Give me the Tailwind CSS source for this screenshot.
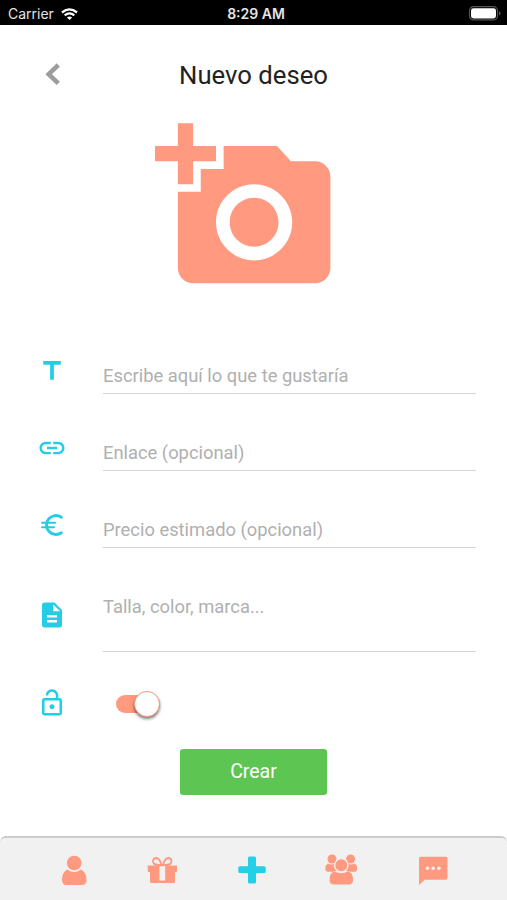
<!DOCTYPE html>
<html lang="es">
<head>
<meta charset="utf-8">
<title>Nuevo deseo</title>
<script src="https://cdn.jsdelivr.net/npm/@tailwindcss/browser@4"></script>
</head>
<body class="w-[507px] h-[900px] overflow-hidden bg-white flex flex-col font-[Roboto,sans-serif]">
  <header class="h-[25px] shrink-0 bg-black text-[#e4e4e4] grid grid-cols-3 items-center pl-[8px] pr-[6px] pt-[2px] font-[Inter,sans-serif]">
    <div class="flex items-center gap-[7px] text-[14px] leading-none">
      <span>Carrier</span>
      <svg class="w-[17px] h-[12px]" viewBox="0 0 17 12" fill="none" stroke="#fff" stroke-width="2.3"><path d="M1 4.5Q8.500 -1.800 16 4.500M3.700 7.400Q8.500 3.400 13.300 7.400"/><path d="M8.500 12L5.900 9.400Q8.500 7.400 11.100 9.400Z" fill="#fff" stroke="none"/></svg>
    </div>
    <div class="pl-[3px] text-center text-[14px] leading-none font-semibold whitespace-nowrap">8:29 AM</div>
    <svg class="w-[33px] h-[15px] justify-self-end" viewBox="0 0 33 15"><rect x="1.500" y=".7" width="28" height="13.200" rx="4" fill="none" stroke="#555" stroke-width="1.200"/><rect x="3" y="2.200" width="25" height="10.200" rx="2.400" fill="#fff"/><path d="M31 5v4.600q1.500-.6 1.500-2.300T31 5z" fill="#555"/></svg>
  </header>

  <div class="h-[98px] shrink-0 grid grid-cols-[104px_1fr_104px] items-start pt-[34px]">
    <svg class="w-[18px] h-[24px] ml-[44px] mt-[3px]" viewBox="0 0 18 24" fill="none" stroke="#9d9d9d" stroke-width="4.600"><path d="M14.300 3L4.700 12.200L14.300 21.400"/></svg>
    <h1 class="text-center text-[25.7px] leading-[32px] text-[#222]">Nuevo deseo</h1>
  </div>

  <main class="flex-1 flex flex-col">
    <svg class="w-[183px] h-[184px] ml-[155px] -mt-[8px] shrink-0" viewBox="0 0 24 24" fill="#ff9980"><path d="M3 4V1h2v3h3v2H5v3H3V6H0V4h3zm3 6V7h3V4h7l1.830 2H21c1.100 0 2 .9 2 2v12c0 1.100-.9 2-2 2H5c-1.100 0-2-.9-2-2V10h3zm7 9c2.760 0 5-2.240 5-5s-2.240-5-5-5-5 2.240-5 5 2.240 5 5 5zm-3.200-5c0 1.770 1.430 3.200 3.200 3.200s3.200-1.430 3.200-3.200-1.430-3.200-3.200-3.200-3.200 1.430-3.200 3.200z"/></svg>

    <form class="mt-[19px] ml-[37px] mr-[31px] flex flex-col text-[18.35px] text-[#b0b0b0] leading-[36px]">
      <div class="h-[77px] flex gap-[36px] pt-[38px]">
        <svg class="w-[30px] h-[30px] shrink-0" viewBox="0 0 24 24" fill="#24cde6"><path d="M5 4v3h5.500v12h3V7H19V4z"/></svg>
        <div class="flex-1 h-[38px] pt-[2px] border-b border-[#d4d4d4]">Escribe aquí lo que te gustaría</div>
      </div>
      <div class="h-[77px] flex gap-[36px] pt-[38px]">
        <svg class="w-[30px] h-[30px] shrink-0" viewBox="0 0 24 24" fill="#24cde6"><path d="M3.900 12c0-1.710 1.390-3.100 3.100-3.100h4V7H7c-2.760 0-5 2.240-5 5s2.240 5 5 5h4v-1.900H7c-1.710 0-3.100-1.390-3.100-3.100zM8 13h8v-2H8v2zm9-6h-4v1.900h4c1.710 0 3.100 1.390 3.100 3.100s-1.390 3.100-3.100 3.100h-4V17h4c2.760 0 5-2.240 5-5s-2.240-5-5-5z"/></svg>
        <div class="flex-1 h-[38px] pt-[2px] border-b border-[#d4d4d4]">Enlace (opcional)</div>
      </div>
      <div class="h-[77px] flex gap-[36px] pt-[38px]">
        <svg class="w-[30px] h-[30px] shrink-0" viewBox="0 0 30 30" fill="none" stroke="#24cde6" stroke-linecap="round"><path d="M24.400 7.200A9.500 9.500 0 1 0 24.400 22.800" stroke-width="2.900"/><path d="M5 12.800H18.200M5 17.200H17.200" stroke-width="1.900"/></svg>
        <div class="flex-1 h-[38px] pt-[2px] border-b border-[#d4d4d4]">Precio estimado (opcional)</div>
      </div>
      <div class="h-[104px] flex gap-[36px] pt-[38px]">
        <svg class="w-[30px] h-[30px] mt-[13px] shrink-0" viewBox="0 0 24 24" fill="#24cde6"><path d="M14 2H6c-1.100 0-2 .9-2 2v16c0 1.100.89 2 1.990 2H18c1.100 0 2-.9 2-2V8l-6-6zm2 16H8v-2h8v2zm0-4H8v-2h8v2zm-3-5V3.500L18.500 9H13z"/></svg>
        <div class="flex-1 h-[65px] pt-[2px] border-b border-[#d4d4d4]">Talla, color, marca...</div>
      </div>
      <div class="h-[65px] flex items-center gap-[49px] pt-[35px]">
        <svg class="w-[30px] h-[30px] shrink-0" viewBox="0 0 24 24" fill="#24cde6"><path d="M12 17c1.100 0 2-.9 2-2s-.9-2-2-2-2 .9-2 2 .9 2 2 2zm6-9h-1V6c0-2.760-2.240-5-5-5S7 3.240 7 6h1.900c0-1.710 1.390-3.100 3.100-3.100 1.710 0 3.100 1.390 3.100 3.100v2H6c-1.100 0-2 .9-2 2v10c0 1.100.9 2 2 2h12c1.100 0 2-.9 2-2V10c0-1.100-.9-2-2-2zm0 12H6V10h12v10z"/></svg>
        <span class="mt-[2px] w-[44px] h-[18px] rounded-full bg-[#ff9980] flex items-center justify-end"><span class="w-[26px] h-[26px] shrink-0 rounded-full bg-white border border-[#ff9980] shadow-[0_2px_3px_rgba(0,0,0,0.5)]"></span></span>
      </div>
    </form>
    <button class="mt-[31px] ml-[180px] w-[147px] h-[46px] rounded-[3px] bg-[#5dc551] text-white text-[19.500px]">Crear</button>
  </main>

  <nav class="h-[64px] shrink-0 rounded-t-[6px] border-t-[2px] border-[#cbcbcb] bg-[#f1f1f1]">
    <div class="h-full flex items-center justify-between pl-[60px] pr-[58px] pt-[2px]">
      <svg class="w-[28px] h-[32px]" viewBox="0 0 28 32" fill="#ff9980"><circle cx="14.200" cy="9" r="7.300"/><path d="M7.300 15.500Q14.200 20.500 21.100 15.500Q26.500 18.500 26.500 26Q26.500 31 22 31H6.500Q2 31 2 26Q2 18.500 7.300 15.500Z"/></svg>
      <svg class="w-[32px] h-[32px]" viewBox="1 0 32 32" fill="#ff9980"><path d="M2.500 11.500H30.500Q31.300 11.500 31.200 12.300L30.800 18H29V27.500Q29 29 27.500 29H5.500Q4 29 4 27.500V18H2L1.500 12.300Q1.500 11.500 2.500 11.500Z"/><rect x="13.400" y="11.800" width="5.800" height="14.700" fill="#f1f1f1"/><path d="M15.500 11.200C14.500 7 12.500 4 10 4C6.800 4 6.200 8 8 9.800Q9.500 11.200 15.500 11.200ZM17 11.200C18 7 20 4 22.500 4C25.700 4 26.300 8 24.500 9.800Q23 11.200 17 11.200Z" fill="none" stroke="#ff9980" stroke-width="1.900"/></svg>
      <svg class="w-[28px] h-[32px]" viewBox="0 0 28 32" fill="#24cfe7"><path d="M11.500 2.400H16.500Q18 2.400 18 3.900V12.300H26.200Q27.700 12.300 27.700 13.800V17.600Q27.700 19.100 26.200 19.100H18V27.900Q18 29.400 16.500 29.400H11.500Q10 29.400 10 27.900V19.100H1.800Q.3 19.100 .3 17.600V13.800Q.3 12.300 1.800 12.300H10V3.900Q10 2.400 11.500 2.400Z"/></svg>
      <svg class="w-[34px] h-[32px]" viewBox="0 0 34 32" fill="#ff9980"><circle cx="8" cy="5" r="4.500"/><circle cx="26.600" cy="5" r="4.500"/><path d="M3.800 9.400Q7.800 11.400 10.200 9.400Q9.500 14 13 17Q10 17.300 9 17.800H4Q1.300 17.800 1.300 14.800Q1.300 11 3.800 9.400ZM30.800 9.400Q26.800 11.400 24.400 9.400Q25.100 14 21.600 17Q24.600 17.300 25.600 17.800H30.300Q33.200 17.800 33.200 14.800Q33.200 11 30.800 9.400Z"/><circle cx="17.300" cy="11.200" r="6.600" stroke="#f1f1f1" stroke-width="1.200"/><path d="M10.600 17.600Q17.300 21 24 17.600Q29 18.500 29 26Q29 30.400 25.200 30.400H9.400Q5.600 30.400 5.600 26Q5.600 18.500 10.600 17.600Z"/></svg>
      <svg class="w-[32px] h-[32px]" viewBox="0 0 32 32"><path d="M3.700 2.800H28.800Q30.500 2.800 30.500 4.500V24Q30.500 25.700 28.800 25.700H7.800L2 31V4.500Q2 2.800 3.700 2.800Z" fill="#ff9980"/><g fill="#f4eeec"><circle cx="10.500" cy="14.300" r="1.800"/><circle cx="16.200" cy="14.300" r="1.800"/><circle cx="21.900" cy="14.300" r="1.800"/></g></svg>
    </div>
  </nav>
</body>
</html>
